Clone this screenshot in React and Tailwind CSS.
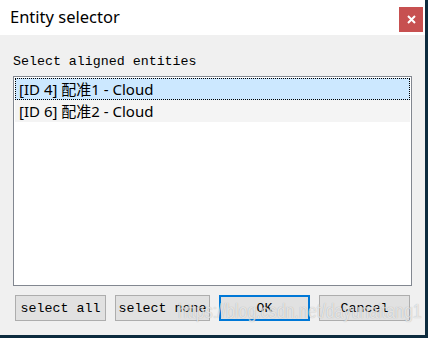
import React from "react";

const ITEMS = [
  { id: 4, name: "配准1 - Cloud" },
  { id: 6, name: "配准2 - Cloud" },
];

const MONO = "font-['Liberation_Mono',monospace]";
const UI = "font-['Noto_Sans','Noto_Sans_CJK_SC',sans-serif]";

function DlgButton({ label, primary, className }) {
  return (
    <button
      className={`flex h-[26px] items-center justify-center bg-[#e1e1e1] pt-px text-[13.3px] text-black ${MONO} ${
        primary ? "border-2 border-[#0078d7]" : "border border-[#adadad]"
      } ${className}`}
    >
      {label}
    </button>
  );
}

export default function App() {
  const [selected, setSelected] = React.useState(0);

  return (
    <div className="flex h-[338px] w-[428px] flex-col overflow-hidden bg-[#0d2b3e]">
      <div className="relative flex h-[335px] w-[425px] flex-col bg-[#f0f0f0]">
        <div className="flex h-[35px] items-center justify-between bg-white pl-[10px] pr-[2px]">
          <span className={`text-[16.5px] leading-none text-black ${UI}`}>Entity selector</span>
          <div className="mt-[4px] flex h-[25px] w-[24px] items-center justify-center bg-[#c75050]">
            <svg width="9" height="9" viewBox="0 0 9 9">
              <path d="M1 1L8 8M8 1L1 8" stroke="white" strokeWidth="2" />
            </svg>
          </div>
        </div>

        <div className={`mt-[20px] pl-[13px] text-[13.3px] leading-none text-black ${MONO}`}>
          Select aligned entities
        </div>

        <div className="ml-[13px] mt-[8px] flex h-[210px] w-[399px] flex-col border border-[#828790] bg-white pl-px pt-px">
          {ITEMS.map((it, i) => (
            <div
              key={it.id}
              onClick={() => setSelected(i)}
              className={`flex h-[22px] w-[395px] items-center pl-[3px] text-[15px] text-black ${UI} ${
                selected === i
                  ? "border border-dotted border-black bg-[#cce8ff]"
                  : "border border-transparent bg-[#f4f4f4]"
              }`}
            >
              [ID {it.id}] {it.name}
            </div>
          ))}
        </div>

        <div className="ml-[15px] mt-[9px] flex gap-[9px]">
          <DlgButton label="select all" className="w-[91px]" />
          <DlgButton label="select none" className="w-[95px]" />
          <DlgButton label="OK" primary className="w-[91px]" />
          <DlgButton label="Cancel" className="w-[91px]" />
        </div>

        {/* watermark over the buttons */}
        <div className="pointer-events-none absolute left-[178px] top-[301px] origin-left scale-x-[0.8] whitespace-nowrap font-['Liberation_Sans',sans-serif] text-[20px] leading-none text-white/70 [text-shadow:0_0_1px_rgba(0,0,0,0.3)]">
          https://blog.csdn.net/dayunaitang1
        </div>
      </div>
    </div>
  );
}
